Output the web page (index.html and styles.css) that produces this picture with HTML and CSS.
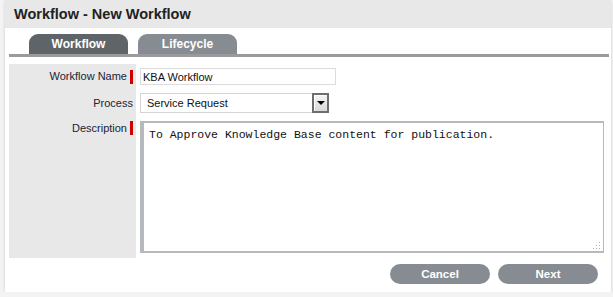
FILE: index.html
```html
<!DOCTYPE html>
<html lang="en">
<head>
    <meta charset="UTF-8">
    <meta name="viewport" content="width=device-width, initial-scale=1.0">
    <title>Workflow - New Workflow</title>
    <link rel="stylesheet" href="styles.css">
</head>
<body>
    <div class="page">
        <div class="page-header">
            <h1>Workflow - New Workflow</h1>
        </div>

        <div class="panel">
            <div class="tabs">
                <a class="tab tab-active" href="#">Workflow</a>
                <a class="tab" href="#">Lifecycle</a>
            </div>

            <div class="form">
                <div class="form-label row-name">Workflow Name<span class="required"></span></div>
                <div class="form-field row-name">
                    <input class="text-input" type="text" value="KBA Workflow">
                </div>

                <div class="form-label row-process">Process</div>
                <div class="form-field row-process">
                    <div class="select">
                        <span class="select-value">Service Request</span>
                        <span class="select-btn"><span class="select-arrow"></span></span>
                    </div>
                </div>

                <div class="form-label row-desc">Description<span class="required"></span></div>
                <div class="form-field row-desc">
                    <div class="textarea-wrap">
                        <textarea class="textarea">To Approve Knowledge Base content for publication.</textarea>
                        <svg class="grip" width="8" height="8" viewBox="0 0 8 8">
                            <rect x="6" y="0" width="1" height="1" fill="#b5b5b5"/>
                            <rect x="6" y="3" width="1" height="1" fill="#b5b5b5"/>
                            <rect x="3" y="3" width="1" height="1" fill="#b5b5b5"/>
                            <rect x="6" y="6" width="1" height="1" fill="#b5b5b5"/>
                            <rect x="3" y="6" width="1" height="1" fill="#b5b5b5"/>
                            <rect x="0" y="6" width="1" height="1" fill="#b5b5b5"/>
                        </svg>
                    </div>
                </div>
            </div>

            <div class="form-actions">
                <button class="btn" id="cancel">Cancel</button>
                <button class="btn" id="next">Next</button>
            </div>
        </div>
    </div>
</body>
</html>
```

FILE: styles.css
```css
body {
    margin: 0;
    padding: 0;
    background: #f3f3f3;
    font-family: "Liberation Sans", Arial, sans-serif;
    font-size: 11px;
    color: #222222;
}

.page {
    margin-left: 5px;
    width: 606px;
    background: #ffffff;
    box-shadow: 0 1px 3px rgba(0, 0, 0, 0.15);
}

.page-header {
    background: #e8e8e8;
    height: 28px;
    padding-left: 9px;
}

.page-header h1 {
    margin: 0;
    font-size: 14.5px;
    line-height: 28px;
    font-weight: bold;
    color: #222222;
}

.panel {
    padding: 6px 2px 8px 4px;
}

.tabs {
    display: flex;
    gap: 10px;
    padding-left: 20px;
    border-bottom: 3px solid #9a9a9a;
}

.tab {
    display: block;
    width: 99px;
    height: 20px;
    border-radius: 9px 9px 0 0;
    background: #868c91;
    color: #ffffff;
    font-size: 12px;
    font-weight: bold;
    line-height: 20px;
    text-align: center;
    text-decoration: none;
}

.tab-active {
    background: #5f6468;
}

.form {
    display: grid;
    grid-template-columns: 127px 1fr;
    column-gap: 4px;
    margin-top: 7px;
}

.form-label {
    display: flex;
    justify-content: flex-end;
    align-items: flex-start;
    background: #e8e8e8;
    padding: 4px 3px 4px 0;
    color: #222233;
}

.form-field {
    padding: 4px 0;
}

.row-name.form-label { line-height: 17px; }
.row-name.form-label .required { margin-top: 2px; }
.row-process.form-label { line-height: 20px; }
.row-desc.form-label { line-height: 14px; padding-bottom: 5px; }
.row-desc.form-field { padding-bottom: 5px; }

.required {
    display: inline-block;
    width: 3px;
    height: 14px;
    margin-left: 3px;
    background: #cc0000;
}

.text-input {
    display: block;
    box-sizing: border-box;
    width: 196px;
    height: 17px;
    margin: 0;
    padding: 0 2px;
    border: 1px solid #dcdcdc;
    font-family: inherit;
    font-size: 11px;
    color: #111111;
    outline: none;
}

.select {
    display: flex;
    align-items: center;
    box-sizing: border-box;
    width: 189px;
    height: 20px;
    border: 1px solid #d4d4d4;
    border-right: none;
}

.select-value {
    padding-left: 6px;
    color: #111111;
}

.select-btn {
    display: flex;
    align-items: center;
    justify-content: center;
    box-sizing: border-box;
    width: 17px;
    height: 20px;
    margin: -1px 0 -1px auto;
    border: 2px solid #6e6e6e;
    box-shadow: inset 1px 1px 0 #ffffff;
    background: linear-gradient(#f4f4f4, #d9d9d9);
}

.select-arrow {
    width: 0;
    height: 0;
    border-left: 4px solid transparent;
    border-right: 4px solid transparent;
    border-top: 4px solid #000000;
}

.textarea-wrap {
    position: relative;
    width: 464px;
}

.textarea {
    display: block;
    box-sizing: border-box;
    width: 464px;
    height: 132px;
    margin: 0;
    padding: 5px 5px;
    border-style: solid;
    border-color: #b6babe;
    border-width: 2px 1px 2px 4px;
    font-family: "Liberation Mono", "Courier New", monospace;
    font-size: 11.5px;
    line-height: 14px;
    color: #111111;
    resize: none;
    outline: none;
}

.grip {
    position: absolute;
    right: 3px;
    bottom: 3px;
}

.form-actions {
    display: flex;
    justify-content: flex-end;
    gap: 8px;
    padding: 6px 11px 0 0;
}

.btn {
    width: 100px;
    height: 20px;
    padding: 0;
    border: none;
    border-radius: 10px;
    background: #868c91;
    color: #ffffff;
    font-family: inherit;
    font-size: 11.5px;
    font-weight: bold;
    cursor: pointer;
}
```
